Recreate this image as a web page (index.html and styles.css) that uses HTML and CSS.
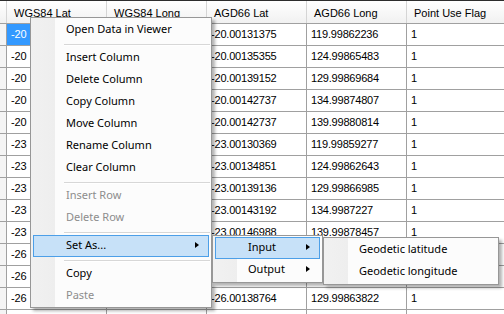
FILE: index.html
```html
<html>
<head>
    <title>Points</title>
    <link rel="stylesheet" href="styles.css">
</head>
<body>

    <div class="grid">
        <div class="row head">
            <div class="rh"></div>
            <div class="c">WGS84 Lat</div>
            <div class="c">WGS84 Long</div>
            <div class="c">AGD66 Lat</div>
            <div class="c">AGD66 Long</div>
            <div class="c">Point Use Flag</div>
        </div>
        <div class="row"><div class="rh"></div><div class="c sel">-20</div><div class="c"></div><div class="c">-20.00131375</div><div class="c">119.99862236</div><div class="c">1</div></div>
        <div class="row"><div class="rh"></div><div class="c">-20</div><div class="c"></div><div class="c">-20.00135355</div><div class="c">124.99865483</div><div class="c">1</div></div>
        <div class="row"><div class="rh"></div><div class="c">-20</div><div class="c"></div><div class="c">-20.00139152</div><div class="c">129.99869684</div><div class="c">1</div></div>
        <div class="row"><div class="rh"></div><div class="c">-20</div><div class="c"></div><div class="c">-20.00142737</div><div class="c">134.99874807</div><div class="c">1</div></div>
        <div class="row"><div class="rh"></div><div class="c">-20</div><div class="c"></div><div class="c">-20.00142737</div><div class="c">139.99880814</div><div class="c">1</div></div>
        <div class="row"><div class="rh"></div><div class="c">-23</div><div class="c"></div><div class="c">-23.00130369</div><div class="c">119.99859277</div><div class="c">1</div></div>
        <div class="row"><div class="rh"></div><div class="c">-23</div><div class="c"></div><div class="c">-23.00134851</div><div class="c">124.99862643</div><div class="c">1</div></div>
        <div class="row"><div class="rh"></div><div class="c">-23</div><div class="c"></div><div class="c">-23.00139136</div><div class="c">129.99866985</div><div class="c">1</div></div>
        <div class="row"><div class="rh"></div><div class="c">-23</div><div class="c"></div><div class="c">-23.00143192</div><div class="c">134.9987227</div><div class="c">1</div></div>
        <div class="row"><div class="rh"></div><div class="c">-23</div><div class="c"></div><div class="c">-23.00146988</div><div class="c">139.99878457</div><div class="c">1</div></div>
        <div class="row"><div class="rh"></div><div class="c">-26</div><div class="c"></div><div class="c"></div><div class="c"></div><div class="c"></div></div>
        <div class="row"><div class="rh"></div><div class="c">-26</div><div class="c"></div><div class="c"></div><div class="c"></div><div class="c"></div></div>
        <div class="row"><div class="rh"></div><div class="c">-26</div><div class="c"></div><div class="c">-26.00138764</div><div class="c">129.99863822</div><div class="c">1</div></div>
        <div class="row"><div class="rh"></div><div class="c"></div><div class="c"></div><div class="c"></div><div class="c"></div><div class="c"></div></div>
    </div>

    <div class="menu main">
        <div class="item">Open Data in Viewer</div>
        <div class="sep"></div>
        <div class="item">Insert Column</div>
        <div class="item">Delete Column</div>
        <div class="item">Copy Column</div>
        <div class="item">Move Column</div>
        <div class="item">Rename Column</div>
        <div class="item">Clear Column</div>
        <div class="sep"></div>
        <div class="item dis">Insert Row</div>
        <div class="item dis">Delete Row</div>
        <div class="sep"></div>
        <div class="item hot sub">Set As...</div>
        <div class="sep"></div>
        <div class="item">Copy</div>
        <div class="item dis">Paste</div>
    </div>

    <div class="menu setas">
        <div class="item hot sub">Input</div>
        <div class="item sub">Output</div>
    </div>

    <div class="menu input">
        <div class="item">Geodetic latitude</div>
        <div class="item">Geodetic longitude</div>
    </div>

</body>
</html>
```

FILE: styles.css
```css
* {box-sizing: border-box;}
html, body {margin: 0; height: 100%; overflow: hidden; background: #fff;}
body {font-family: "Liberation Sans", Arial, sans-serif; font-size: 11px; color: #000; position: relative;}

.grid {border-top: 1px solid #2d2d2d; width: 504px;}
.row {display: flex; height: 22px; border-bottom: 1px solid #a0a0a0; overflow: hidden;}
.row .rh {flex: none; width: 7px; border-right: 1px solid #a0a0a0; background: #f4f4f4;}
.row .c {
    flex: none;
    width: 100px;
    border-right: 1px solid #a0a0a0;
    padding-left: 4px;
    line-height: 21px;
    letter-spacing: -0.2px;
    white-space: nowrap;
    overflow: hidden;
}
.row .sel {background-color: #3399ff; color: #fff;}
.head {height: 23px; background: linear-gradient(#fff, #f1f1f1);}
.head .rh {background: none; border-right-color: #d5d5d5;}
.head .c {border-right-color: #d5d5d5; padding: 2px 0 0 7px; line-height: 20px; letter-spacing: 0;}

/* context menus */
.menu {
    position: absolute;
    border: 1px solid #979797;
    padding: 1px 1px 0;
    background: linear-gradient(to right, #f1f1f1 0, #eeeeee 24px, #fcfcfc 24px);
    box-shadow: 3px 3px 3px rgba(0, 0, 0, 0.3);
    font-family: "Noto Sans", sans-serif;
    font-size: 11px;
}
.main {left: 30px; top: 17px; width: 182px; height: 291px;}
.setas {left: 212px; top: 235px; width: 111px; height: 48px;}
.input {left: 323px; top: 237px; width: 176px; height: 48px;}

.menu .item {
    position: relative;
    height: 22px;
    line-height: 18px;
    margin: 0 1px;
    padding-left: 32px;
    border: 1px solid transparent;
    white-space: nowrap;
}
.menu .dis {color: #8d8d8d;}
.menu .hot {background-color: #c7e1f8; border-color: #4c9fe8;}
.menu .sub::after {
    content: "";
    position: absolute;
    right: 9px;
    top: 6px;
    border-left: 4px solid #000;
    border-top: 3.5px solid transparent;
    border-bottom: 3.5px solid transparent;
}
.menu .sep {
    height: 6px;
    margin-left: 32px;
    background: linear-gradient(transparent 3px, #d7d7d7 3px, #d7d7d7 4px, #fff 4px, #fff 5px, transparent 5px);
}
```
